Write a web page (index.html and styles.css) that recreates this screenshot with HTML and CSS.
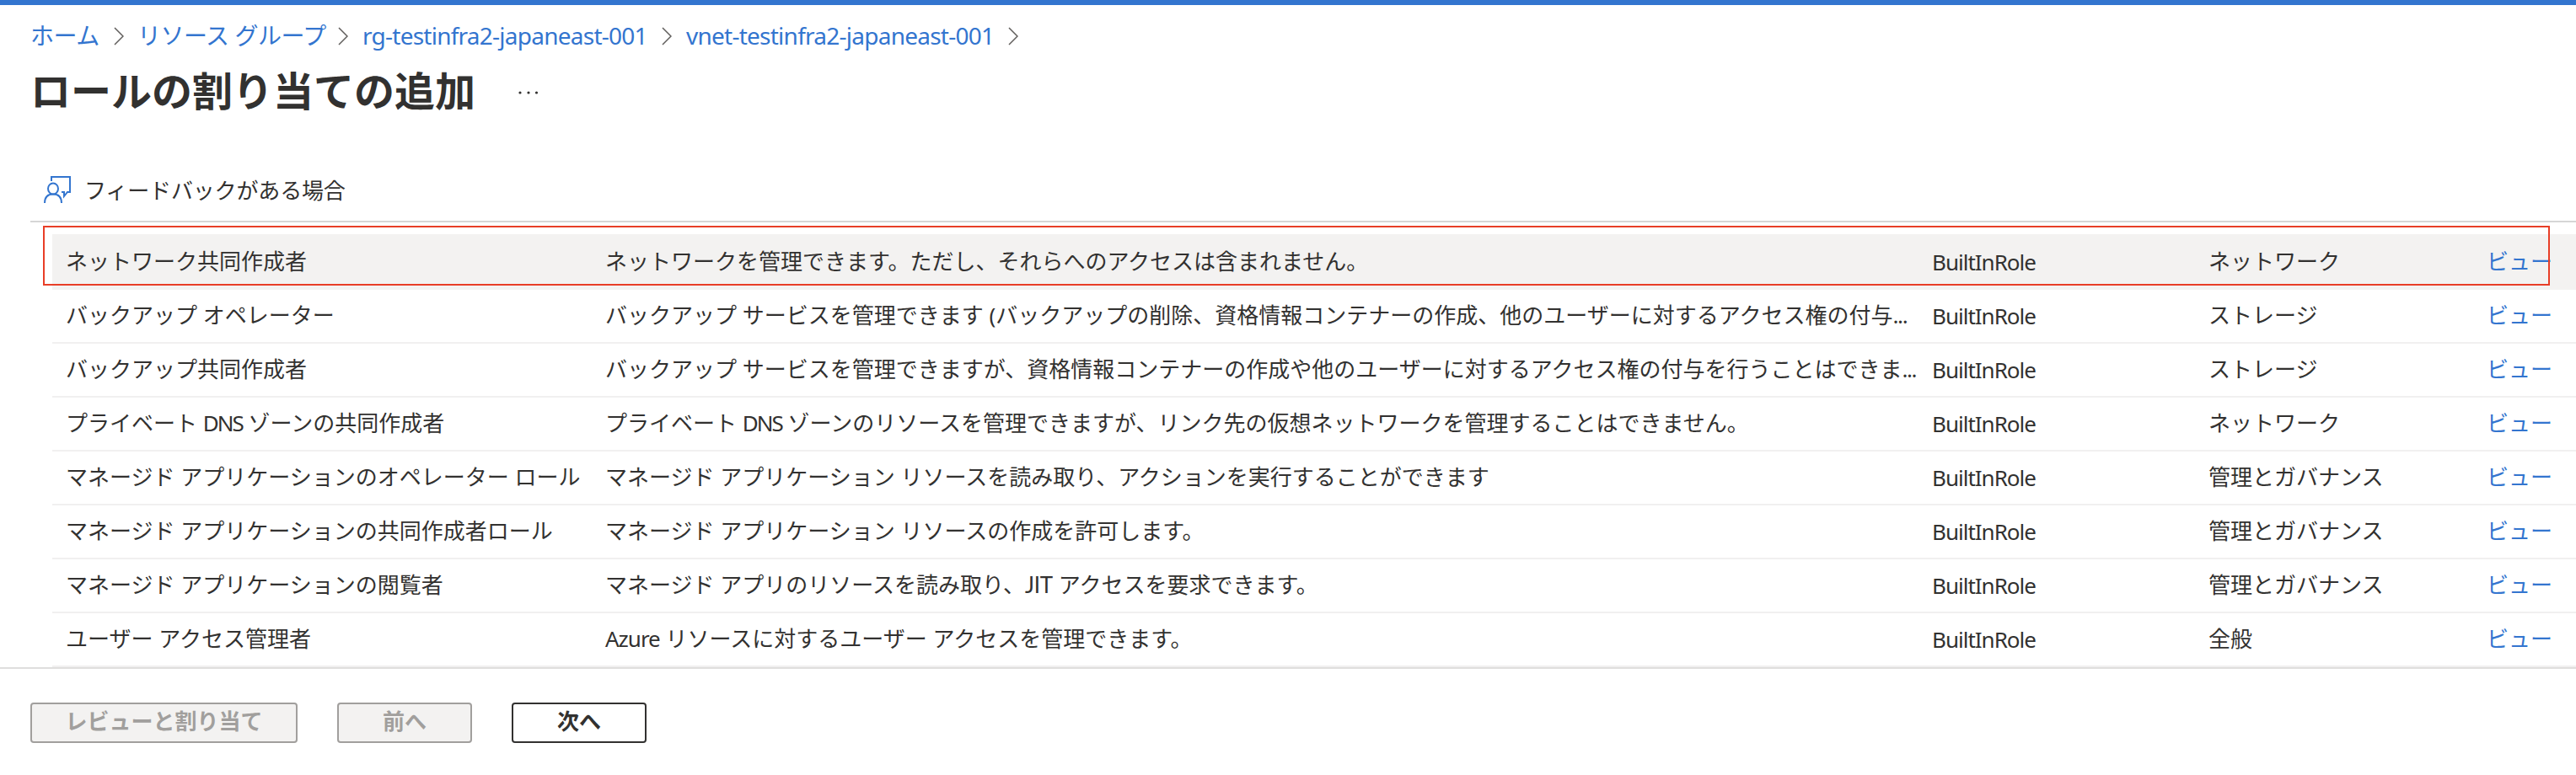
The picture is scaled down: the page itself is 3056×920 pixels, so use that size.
FILE: index.html
```html
<!DOCTYPE html>
<html lang="ja">
<head>
    <meta charset="UTF-8">
    <meta name="viewport" content="width=device-width, initial-scale=1.0">
    <title>ロールの割り当ての追加</title>
    <link rel="stylesheet" href="styles.css">
</head>
<body>
    <div class="topBar"></div>

    <nav class="breadcrumb">
        <a class="crumbHome">ホーム</a>
        <svg class="chevron" viewBox="0 0 12 22"><path d="M1 1L11 11L1 21"/></svg>
        <a class="crumbGroups">リソース グループ</a>
        <svg class="chevron" viewBox="0 0 12 22"><path d="M1 1L11 11L1 21"/></svg>
        <a class="crumbRg">rg-testinfra2-japaneast-001</a>
        <svg class="chevron" viewBox="0 0 12 22"><path d="M1 1L11 11L1 21"/></svg>
        <a class="crumbVnet">vnet-testinfra2-japaneast-001</a>
        <svg class="chevron" viewBox="0 0 12 22"><path d="M1 1L11 11L1 21"/></svg>
    </nav>

    <header class="titleRow">
        <h1>ロールの割り当ての追加</h1>
        <svg class="more" viewBox="0 0 24 4"><circle cx="2" cy="2" r="1.6"/><circle cx="12" cy="2" r="1.6"/><circle cx="21.5" cy="2" r="1.6"/></svg>
    </header>

    <div class="toolbar">
        <svg class="feedbackIcon" viewBox="0 0 32 32">
            <path d="M9 6V1H31V19H28L24 24V19H21"/>
            <ellipse cx="11" cy="15" rx="6" ry="6.5"/>
            <path d="M1 32C1 25 5 21.5 11 21.5S21 25 21 32"/>
        </svg>
        <span>フィードバックがある場合</span>
    </div>

    <main class="roles">
        <div class="highlight"></div>
        <div class="row selected">
            <span>ネットワーク共同作成者</span>
            <span>ネットワークを管理できます。ただし、それらへのアクセスは含まれません。</span>
            <span class="latin">BuiltInRole</span>
            <span>ネットワーク</span>
            <a>ビュー</a>
        </div>
        <div class="row">
            <span>バックアップ オペレーター</span>
            <span>バックアップ サービスを管理できます (バックアップの削除、資格情報コンテナーの作成、他のユーザーに対するアクセス権の付与<b class="dots">...</b></span>
            <span class="latin">BuiltInRole</span>
            <span>ストレージ</span>
            <a>ビュー</a>
        </div>
        <div class="row">
            <span>バックアップ共同作成者</span>
            <span>バックアップ サービスを管理できますが、資格情報コンテナーの作成や他のユーザーに対するアクセス権の付与を行うことはできま<b class="dots">...</b></span>
            <span class="latin">BuiltInRole</span>
            <span>ストレージ</span>
            <a>ビュー</a>
        </div>
        <div class="row">
            <span>プライベート <b class="caps">DNS</b> ゾーンの共同作成者</span>
            <span>プライベート <b class="caps">DNS</b> ゾーンのリソースを管理できますが、リンク先の仮想ネットワークを管理することはできません。</span>
            <span class="latin">BuiltInRole</span>
            <span>ネットワーク</span>
            <a>ビュー</a>
        </div>
        <div class="row">
            <span>マネージド アプリケーションのオペレーター ロール</span>
            <span>マネージド アプリケーション リソースを読み取り、アクションを実行することができます</span>
            <span class="latin">BuiltInRole</span>
            <span>管理とガバナンス</span>
            <a>ビュー</a>
        </div>
        <div class="row">
            <span>マネージド アプリケーションの共同作成者ロール</span>
            <span>マネージド アプリケーション リソースの作成を許可します。</span>
            <span class="latin">BuiltInRole</span>
            <span>管理とガバナンス</span>
            <a>ビュー</a>
        </div>
        <div class="row">
            <span>マネージド アプリケーションの閲覧者</span>
            <span>マネージド アプリのリソースを読み取り、<b class="jit">JIT</b> アクセスを要求できます。</span>
            <span class="latin">BuiltInRole</span>
            <span>管理とガバナンス</span>
            <a>ビュー</a>
        </div>
        <div class="row">
            <span>ユーザー アクセス管理者</span>
            <span><b class="latin">Azure</b> リソースに対するユーザー アクセスを管理できます。</span>
            <span class="latin">BuiltInRole</span>
            <span>全般</span>
            <a>ビュー</a>
        </div>
    </main>

    <footer class="footer">
        <button class="reviewBtn" disabled>レビューと割り当て</button>
        <button disabled>前へ</button>
        <button>次へ</button>
    </footer>
</body>
</html>
```

FILE: styles.css
```css
* {
  box-sizing: border-box;
}

body {
  margin: 0;
  height: 920px;
  overflow: hidden;
  background: #fff;
  color: #323130;
  font-family: "Noto Sans", "Noto Sans CJK JP", sans-serif;
  font-size: 26px;
  white-space: nowrap;
}

a {
  color: #3375cf;
}

.topBar {
  height: 6px;
  background: #3375cf;
}

/* breadcrumb */
.breadcrumb {
  display: flex;
  align-items: center;
  height: 74px;
  padding-left: 36px;
  font-size: 28px;
  line-height: 36px;
}

.breadcrumb a {
  padding-bottom: 2px;
}

.chevron {
  width: 12px;
  height: 26px;
  fill: none;
  stroke: #605e5c;
  stroke-width: 1.5;
}

.crumbHome {
  width: 99px;
  letter-spacing: -0.5px;
}

.crumbGroups {
  width: 238px;
  margin-left: 16px;
  letter-spacing: -0.5px;
}

.crumbRg {
  width: 355px;
  margin-left: 17px;
  letter-spacing: -0.75px;
}

.crumbVnet {
  width: 382px;
  margin-left: 17px;
  letter-spacing: -0.75px;
}

.titleRow {
  display: flex;
  align-items: center;
  height: 56px;
  padding-left: 36px;
}

h1 {
  margin: 0;
  width: 579px;
  font-size: 48px;
  line-height: 56px;
  font-weight: 700;
}

.more {
  width: 24px;
  height: 4px;
  margin-top: 3px;
  fill: #323130;
}

.toolbar {
  display: flex;
  align-items: center;
  height: 128px;
  margin-left: 36px;
  padding: 52px 0 0 16px;
  border-bottom: 2px solid #d6d6d6;
}

.toolbar span {
  letter-spacing: -0.15px;
}

.feedbackIcon {
  width: 32px;
  height: 32px;
  margin-right: 16px;
  fill: none;
  stroke: #3375cf;
  stroke-width: 2;
}

/* role list */
.roles {
  position: relative;
  padding: 14px 0 0 62px;
}

.highlight {
  position: absolute;
  top: 4px;
  left: 51px;
  width: 2974px;
  height: 71px;
  border: 2px solid #e83e27;
}

.row {
  display: grid;
  grid-template-columns: 640px 1574px 328px 330px 1fr;
  height: 64px;
  padding-left: 16px;
  line-height: 60px;
  border-bottom: 2px solid #f1f0f0;
}

.row.selected {
  height: 66px;
  line-height: 64px;
  background: #f3f2f1;
  border-color: #f3f2f1;
}

.latin {
  font-weight: 400;
  letter-spacing: -1px;
}

.row > .latin {
  padding-top: 1px;
}

.dots {
  font-weight: 400;
  letter-spacing: -1.4px;
}

.caps {
  font-weight: 400;
  letter-spacing: -2px;
}

.jit {
  font-family: Lato, sans-serif;
  font-weight: 400;
  letter-spacing: -0.2px;
}

/* footer */
.footer {
  display: flex;
  gap: 47px;
  height: 128px;
  padding: 40px 36px 0;
  border-top: 2px solid #dfdedd;
}

button {
  width: 160px;
  height: 48px;
  padding: 0 0 4px;
  font: inherit;
  font-weight: 700;
  line-height: 36px;
  color: #323130;
  background: #fff;
  border: 2px solid #323130;
  border-radius: 4px;
}

button:disabled {
  color: #a19f9d;
  background: #f3f2f1;
  border-color: #a19f9d;
}

.reviewBtn {
  width: 317px;
}
```
